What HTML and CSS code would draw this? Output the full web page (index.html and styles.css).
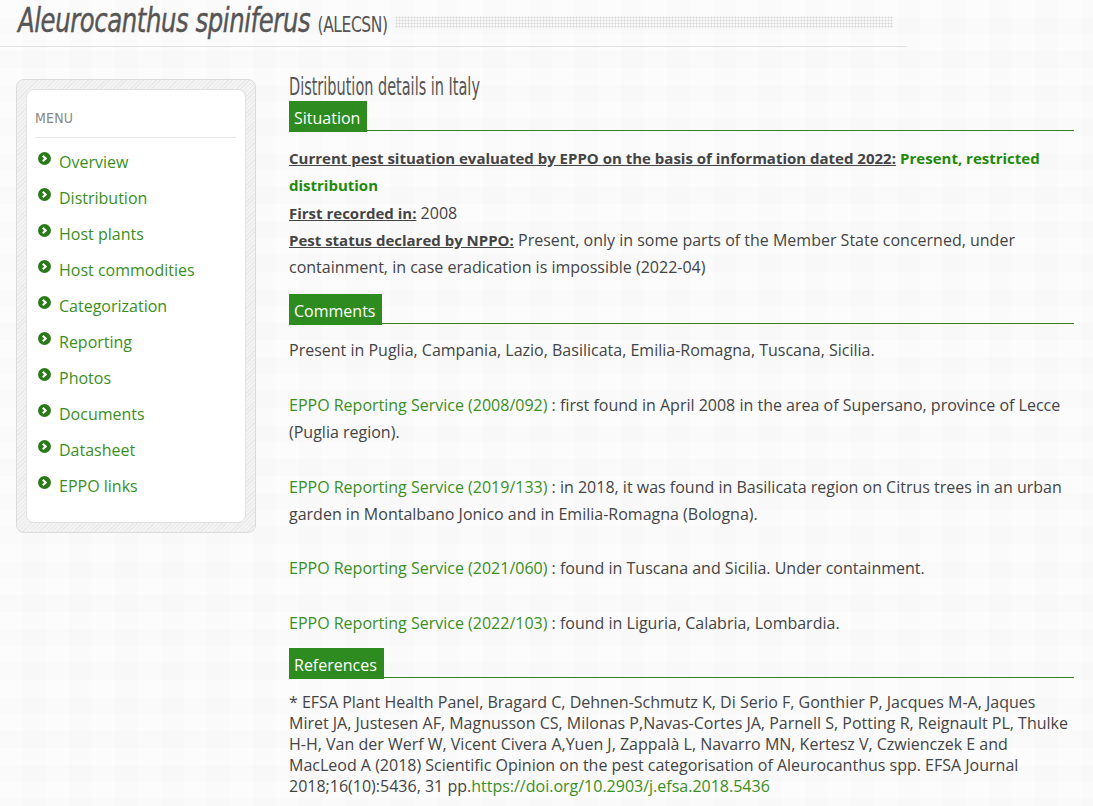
FILE: index.html
```html
<!DOCTYPE html>
<html lang="en">
<head>
<meta charset="utf-8">
<title>Aleurocanthus spiniferus (ALECSN)</title>
<link rel="stylesheet" href="styles.css">
</head>
<body>
<header class="page-head">
  <h1 class="title"><em>Aleurocanthus spiniferus</em> <span class="code">(ALECSN)</span></h1>
  <div class="dots"></div>
</header>
<div class="layout">
  <aside class="side">
    <nav class="menu">
      <div class="menu-title">MENU</div>
      <ul class="menu-list">
        <li><span class="bullet"></span><a href="#">Overview</a></li>
        <li><span class="bullet"></span><a href="#">Distribution</a></li>
        <li><span class="bullet"></span><a href="#">Host plants</a></li>
        <li><span class="bullet"></span><a href="#">Host commodities</a></li>
        <li><span class="bullet"></span><a href="#">Categorization</a></li>
        <li><span class="bullet"></span><a href="#">Reporting</a></li>
        <li><span class="bullet"></span><a href="#">Photos</a></li>
        <li><span class="bullet"></span><a href="#">Documents</a></li>
        <li><span class="bullet"></span><a href="#">Datasheet</a></li>
        <li><span class="bullet"></span><a href="#">EPPO links</a></li>
      </ul>
    </nav>
  </aside>
  <main class="main">
    <h2 class="subtitle">Distribution details in Italy</h2>
    <div class="sec-head"><span>Situation</span></div>
    <div class="text situation">
      <p><b class="u">Current pest situation evaluated by EPPO on the basis of information dated 2022:</b> <b class="green">Present, restricted distribution</b></p>
      <p><b class="u">First recorded in:</b> 2008</p>
      <p><b class="u">Pest status declared by NPPO:</b> Present, only in some parts of the Member State concerned, under containment, in case eradication is impossible (2022-04)</p>
    </div>
    <div class="sec-head"><span>Comments</span></div>
    <div class="text comments">
      <p>Present in Puglia, Campania, Lazio, Basilicata, Emilia-Romagna, Tuscana, Sicilia.</p>
      <p><a href="#">EPPO Reporting Service (2008/092)</a> : first found in April 2008 in the area of Supersano, province of Lecce (Puglia region).</p>
      <p><a href="#">EPPO Reporting Service (2019/133)</a> : in 2018, it was found in Basilicata region on Citrus trees in an urban garden in Montalbano Jonico and in Emilia-Romagna (Bologna).</p>
      <p><a href="#">EPPO Reporting Service (2021/060)</a> : found in Tuscana and Sicilia. Under containment.</p>
      <p><a href="#">EPPO Reporting Service (2022/103)</a> : found in Liguria, Calabria, Lombardia.</p>
    </div>
    <div class="sec-head"><span>References</span></div>
    <p class="refs">* EFSA Plant Health Panel, Bragard C, Dehnen-Schmutz K, Di Serio F, Gonthier P, Jacques M-A, Jaques Miret JA, Justesen AF, Magnusson CS, Milonas P,Navas-Cortes JA, Parnell S, Potting R, Reignault PL, Thulke H-H, Van der Werf W, Vicent Civera A,Yuen J, Zappalà L, Navarro MN, Kertesz V, Czwienczek E and MacLeod A (2018) Scientific Opinion on the pest categorisation of Aleurocanthus spp. EFSA Journal 2018;16(10):5436, 31 pp.<a href="#">https://doi.org/10.2903/j.efsa.2018.5436</a></p>
  </main>
</div>
</body>
</html>
```
FILE: styles.css
```css
html, body {
  margin: 0;
  padding: 0;
}
body {
  background-color: #f8f8f8;
  background-image:
    linear-gradient(90deg, rgba(255,255,255,0.35) 50%, transparent 50%),
    linear-gradient(rgba(255,255,255,0.3) 50%, transparent 50%);
  background-size: 46px 46px, 34px 34px;
  font-family: "Open Sans", "Noto Sans", sans-serif;
  color: #444;
  height: 806px;
  overflow: hidden;
}
a { color: #3a8f22; text-decoration: none; }

.page-head {
  display: flex;
  align-items: center;
  width: 907px;
  height: 47px;
  border-bottom: 1px solid #e3e3e3;
  padding-left: 18px;
  box-sizing: border-box;
}
.title {
  margin: 0;
  font-family: "Liberation Sans Narrow", "DejaVu Sans Condensed", sans-serif;
  font-weight: normal;
  color: #555;
  font-size: 33px;
  letter-spacing: -0.5px;
  white-space: nowrap;
  transform: scaleX(0.82);
  transform-origin: left center;
  margin-right: -68px;
  line-height: 47px;
  -webkit-text-stroke: 0.4px #555;
}
.title em { font-style: italic; }
.title .code { font-size: 21px; -webkit-text-stroke: 0; }
.dots {
  width: 498px;
  height: 12px;
  margin-left: -6px;
  margin-top: -2px;
  background-image: radial-gradient(circle, #dcdcdc 0.9px, transparent 1.2px);
  background-size: 3px 3px;
}

.layout {
  display: flex;
  gap: 33px;
  padding: 32px 19px 0 16px;
}
.side {
  width: 240px;
  flex: none;
  box-sizing: border-box;
  padding: 9px;
  height: 454px;
  border: 1px solid #dcdcdc;
  border-radius: 8px;
  background: repeating-linear-gradient(135deg, #f3f3f3 0 2px, #e9e9e9 2px 3px);
}
.menu {
  background: #fff;
  border: 1px solid #e1e1e1;
  border-radius: 8px;
  height: 100%;
  box-sizing: border-box;
  padding: 20px 9px 0 8px;
}
.menu-title {
  font-family: "Liberation Sans Narrow", "DejaVu Sans Condensed", sans-serif;
  color: #888;
  font-size: 14px;
  line-height: 17px;
  padding-bottom: 10px;
  border-bottom: 1px solid #e8e8e8;
  letter-spacing: 0.2px;
}
.menu-list {
  list-style: none;
  margin: 0;
  padding: 11px 0 0 3px;
}
.menu-list li {
  display: flex;
  align-items: flex-start;
  gap: 8px;
  height: 36px;
  font-size: 16px;
  line-height: 26px;
}
.menu-list a { color: #3a8f22; }
.bullet {
  width: 13px;
  height: 13px;
  border-radius: 50%;
  background: #2b7a19;
  margin-top: 3px;
  position: relative;
  flex: none;
}
.bullet::after {
  content: "";
  position: absolute;
  left: 3px;
  top: 4px;
  width: 3px;
  height: 3px;
  border-right: 2px solid #fff;
  border-top: 2px solid #fff;
  transform: rotate(45deg);
}

.main {
  flex: 1;
  min-width: 0;
}
.subtitle {
  margin: -3px 0 3px;
  font-family: "Liberation Sans Narrow", "DejaVu Sans Condensed", sans-serif;
  font-weight: normal;
  color: #555;
  font-size: 24px;
  line-height: 22px;
  height: 22px;
  white-space: nowrap;
  transform: scaleX(0.67);
  transform-origin: left center;
}
.sec-head {
  border-bottom: 1px solid #3a8022;
  height: 29px;
}
.sec-head span {
  display: inline-block;
  box-sizing: border-box;
  background: #2e8b1f;
  color: #fff;
  font-size: 16px;
  line-height: 28px;
  height: 31px;
  padding: 3px 7px 0 5px;
}
.text {
  font-size: 16px;
  line-height: 27.3px;
  padding: 14px 0 12.5px;
}
.text p { margin: 0; }
.text b { font-size: 15px; }
.u { text-decoration: underline; color: #444; font-weight: 700; }
.green { color: #1f8a0a; }
.comments {
  line-height: 27px;
  padding: 13.5px 0 11.5px;
}
.comments p { margin: 0 0 27.6px; }
.comments p:last-child { margin-bottom: 0; }
.refs {
  margin: 0;
  padding-top: 13.5px;
  font-size: 16px;
  line-height: 21px;
}
```
